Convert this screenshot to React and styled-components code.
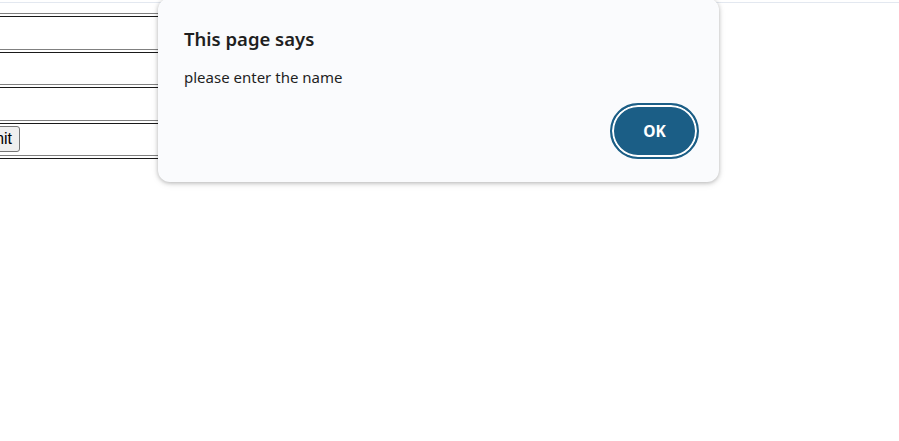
import React from "react";
import styled, { createGlobalStyle } from "styled-components";

const Global = createGlobalStyle`
  html, body { margin: 0; padding: 0; background: #ffffff; overflow: hidden; }
  body { font-family: "Liberation Serif", serif; width: 899px; height: 441px; position: relative; }
`;

const TopRule = styled.div`
  margin-top: 2px;
  height: 1px;
  background: #e3e8f0;
`;

const FormTable = styled.div`
  margin-top: 10px;
  margin-left: -140px;
  width: 300px;
  border-top: 1px solid #808080;
  border-bottom: 1px solid #1a1a1a;
  padding: 2px 0 1.5px;
  display: flex;
  flex-direction: column;
  gap: 2px;
`;

const Cell = styled.div`
  height: 31.5px;
  border-top: 1px solid #1a1a1a;
  border-bottom: 1px solid #808080;
  display: flex;
  align-items: center;
  justify-content: flex-end;
  padding-right: 140px;
`;

const SubmitButton = styled.button`
  font-family: "Liberation Sans", Arial, sans-serif;
  font-size: 16px;
  color: #000;
  background: #efefef;
  border: 1px solid #767676;
  border-radius: 3px;
  height: 26px;
  padding: 0 7px;
`;

const Dialog = styled.div`
  position: absolute;
  left: 158px;
  top: -2px;
  width: 561px;
  height: 184px;
  box-sizing: border-box;
  background: #fafbfd;
  border-radius: 12px;
  box-shadow: 0 1px 4px rgba(0, 0, 0, 0.26), 0 2px 8px rgba(0, 0, 0, 0.07);
  padding: 28px 20px 0 26px;
  display: flex;
  flex-direction: column;
  font-family: "Noto Sans", "Open Sans", sans-serif;
  color: #1f1f1f;
`;

const Title = styled.h1`
  margin: 0;
  font-size: 18.5px;
  font-weight: 600;
  line-height: 26px;
`;

const Message = styled.p`
  margin: 15px 0 0;
  font-size: 15px;
  line-height: 21px;
`;

const Actions = styled.div`
  display: flex;
  justify-content: flex-end;
  margin-top: 14.5px;
`;

const OkButton = styled.button`
  width: 89px;
  height: 56px;
  box-sizing: border-box;
  border-radius: 28px;
  border: 2px solid #1b5e86;
  background: #1b5e86;
  box-shadow: inset 0 0 0 2px #ffffff;
  color: #ffffff;
  font-family: "Noto Sans", "Open Sans", sans-serif;
  font-weight: 700;
  font-size: 15.5px;
  padding: 0;
  cursor: pointer;
`;

export default function App() {
  return (
    <>
      <Global />
      <TopRule />
      <FormTable>
        <Cell />
        <Cell />
        <Cell />
        <Cell>
          <SubmitButton>Submit</SubmitButton>
        </Cell>
      </FormTable>
      <Dialog role="alertdialog">
        <Title>This page says</Title>
        <Message>please enter the name</Message>
        <Actions>
          <OkButton>OK</OkButton>
        </Actions>
      </Dialog>
    </>
  );
}
